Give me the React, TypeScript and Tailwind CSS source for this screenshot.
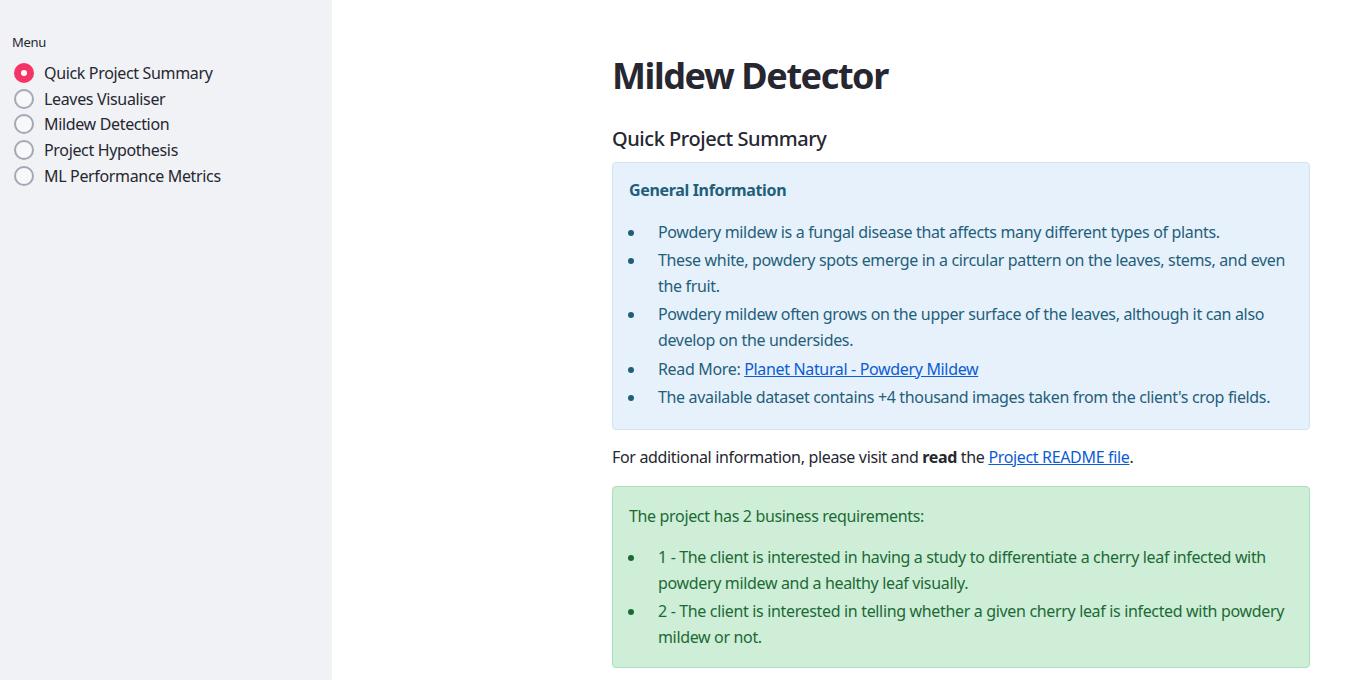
import { useState } from "react";

const MENU = [
  "Quick Project Summary",
  "Leaves Visualiser",
  "Mildew Detection",
  "Project Hypothesis",
  "ML Performance Metrics",
];

function Radio({ checked }: { checked: boolean }) {
  if (checked) {
    return (
      <span className="flex h-5 w-5 flex-shrink-0 items-center justify-center rounded-full bg-[#f63366]">
        <span className="h-[6px] w-[6px] rounded-full bg-white" />
      </span>
    );
  }
  return (
    <span className="h-5 w-5 flex-shrink-0 rounded-full border-2 border-[#a3a8b4] bg-[#f7f8fa]" />
  );
}

export default function App() {
  const [page, setPage] = useState(0);

  return (
    <div
      className="flex h-[680px] w-full overflow-hidden bg-white text-[#262730] tracking-[-0.34px]"
      style={{ fontFamily: '"Noto Sans", "Open Sans", sans-serif' }}
    >
      <aside className="w-[332px] flex-shrink-0 bg-[#f0f2f6] px-3 pt-[34px]">
        <div className="text-[13px] leading-4">Menu</div>
        <div className="mt-[10px] flex flex-col pl-[2px]">
          {MENU.map((label, i) => (
            <button
              key={label}
              type="button"
              onClick={() => setPage(i)}
              className="flex h-[25.8px] items-center gap-[10px] text-left text-[16px]"
            >
              <Radio checked={page === i} />
              <span>{label}</span>
            </button>
          ))}
        </div>
      </aside>

      <main className="flex-1 pl-[280px] pt-[53px]">
        <div className="w-[698px] text-[16px] leading-[1.6]">
          <h1 className="text-[36px] font-bold leading-[46px] tracking-[-1.4px]">
            Mildew Detector
          </h1>
          <h3 className="mt-[26px] text-[20px] font-medium leading-7 tracking-[-0.45px]">
            Quick Project Summary
          </h3>

          <div className="mt-[9px] rounded border border-[#cfe3f6] bg-[#e7f1fb] px-4 pt-[15px] pb-[15px] text-[#1f5f7a]">
            <p className="font-bold">General Information</p>
            <ul className="mt-4 list-disc pl-[17px] marker:text-[#1f5f7a]">
              <li className="my-[3px] pl-[12px]">
                Powdery mildew is a fungal disease that affects many different types of plants.
              </li>
              <li className="my-[3px] pl-[12px]">
                These white, powdery spots emerge in a circular pattern on the leaves, stems, and even the fruit.
              </li>
              <li className="my-[3px] pl-[12px]">
                Powdery mildew often grows on the upper surface of the leaves, although it can also develop on the undersides.
              </li>
              <li className="my-[3px] pl-[12px]">
                Read More:{" "}
                <a href="#" className="text-[#0b5cd5] underline">
                  Planet Natural - Powdery Mildew
                </a>
              </li>
              <li className="my-[3px] pl-[12px]">
                The available dataset contains +4 thousand images taken from the client's crop fields.
              </li>
            </ul>
          </div>

          <p className="mt-[15px]">
            For additional information, please visit and <b>read</b> the{" "}
            <a href="#" className="text-[#0b5cd5] underline">
              Project README file
            </a>
            .
          </p>

          <div className="mt-[16px] rounded border border-[#a8e0b9] bg-[#cfeed8] px-4 pt-[17px] pb-[14px] text-[#1b6a35]">
            <p>The project has 2 business requirements:</p>
            <ul className="mt-[15px] list-disc pl-[17px]">
              <li className="my-[3px] pl-[12px]">
                1 - The client is interested in having a study to differentiate a cherry leaf infected with powdery mildew and a healthy leaf visually.
              </li>
              <li className="my-[3px] pl-[12px]">
                2 - The client is interested in telling whether a given cherry leaf is infected with powdery mildew or not.
              </li>
            </ul>
          </div>
        </div>
      </main>
    </div>
  );
}
